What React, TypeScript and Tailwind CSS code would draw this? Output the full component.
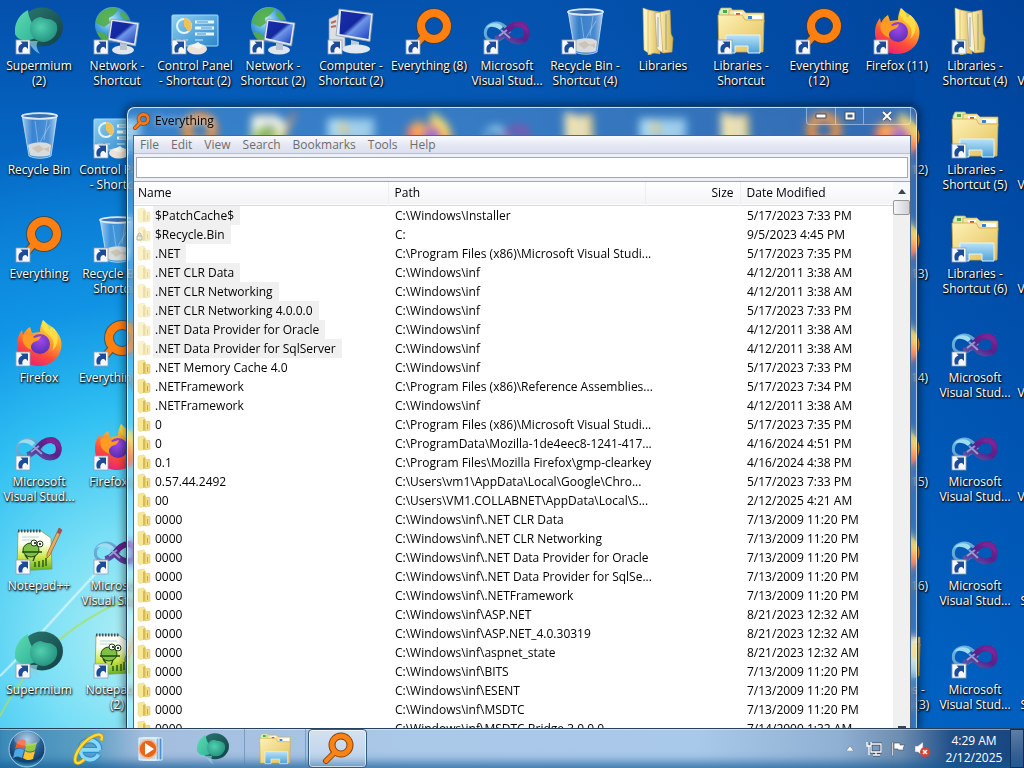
import React from "react";

type IconName = "supermium" | "network" | "control" | "computer" | "everything" | "vs" | "bin" | "library" | "folders" | "firefox" | "notepad";

interface DesktopItem {
  icon: IconName;
  label: string;
  plain?: boolean;
}

function Defs() {
  return (
    <svg width="0" height="0" className="absolute" aria-hidden="true">
      <defs>
        <linearGradient id="teal" x1="0" y1="0" x2="1" y2="1"><stop offset="0" stopColor="#5fdcb4" /><stop offset="1" stopColor="#2fb296" /></linearGradient>
        <radialGradient id="tealCore" cx=".4" cy=".4" r=".65"><stop offset="0" stopColor="#52cfae" /><stop offset="1" stopColor="#23927f" /></radialGradient>
        <linearGradient id="tealDark" x1="0" y1="0" x2="1" y2="1"><stop offset="0" stopColor="#2a7a70" /><stop offset="1" stopColor="#123f45" /></linearGradient>
        <radialGradient id="globe" cx=".4" cy=".35" r=".7"><stop offset="0" stopColor="#c4f1ff" /><stop offset=".5" stopColor="#4aa5e0" /><stop offset="1" stopColor="#1a5ca5" /></radialGradient>
        <linearGradient id="screen" x1="0" y1="0" x2="1" y2="1"><stop offset="0" stopColor="#1a2fa8" /><stop offset=".45" stopColor="#1327a0" /><stop offset=".55" stopColor="#6f97e8" /><stop offset="1" stopColor="#1b3cb8" /></linearGradient>
        <linearGradient id="panel" x1="0" y1="0" x2="1" y2="1"><stop offset="0" stopColor="#8fd0f0" /><stop offset="1" stopColor="#2b86cc" /></linearGradient>
        <linearGradient id="glass" x1="0" y1="0" x2="1" y2="0"><stop offset="0" stopColor="#c9e4fa" stopOpacity=".85" /><stop offset=".3" stopColor="#5d9bdc" stopOpacity=".6" /><stop offset=".75" stopColor="#79b0e4" stopOpacity=".6" /><stop offset="1" stopColor="#d5eafc" stopOpacity=".85" /></linearGradient>
        <linearGradient id="folder" x1="0" y1="0" x2="1" y2="1"><stop offset="0" stopColor="#fdf2b8" /><stop offset="1" stopColor="#e3bf55" /></linearGradient>
        <linearGradient id="folderSide" x1="0" y1="0" x2="1" y2="0"><stop offset="0" stopColor="#fbeeb0" /><stop offset="1" stopColor="#d9b650" /></linearGradient>
        <linearGradient id="blueStand" x1="0" y1="0" x2="0" y2="1"><stop offset="0" stopColor="#b9e3f6" /><stop offset="1" stopColor="#4da1d9" /></linearGradient>
        <linearGradient id="fire" x1=".8" y1="0" x2=".3" y2="1"><stop offset="0" stopColor="#fff04a" /><stop offset=".4" stopColor="#ffa02c" /><stop offset=".7" stopColor="#ff4b3a" /><stop offset="1" stopColor="#e5207a" /></linearGradient>
        <radialGradient id="fireCore" cx=".5" cy=".3" r=".7"><stop offset="0" stopColor="#a04ae8" /><stop offset="1" stopColor="#5b2fb5" /></radialGradient>
        <linearGradient id="vsPurple" x1="0" y1="1" x2="1" y2="0"><stop offset="0" stopColor="#5b62b4" /><stop offset=".5" stopColor="#5a2089" /><stop offset="1" stopColor="#74258f" /></linearGradient>
        <linearGradient id="vsBlue" x1="0" y1="0" x2="1" y2="1"><stop offset="0" stopColor="#67b9df" /><stop offset="1" stopColor="#6687c4" /></linearGradient>
        <linearGradient id="note" x1="0" y1="0" x2="0" y2="1"><stop offset=".3" stopColor="#fdfff4" /><stop offset=".65" stopColor="#cfe84a" /><stop offset="1" stopColor="#5fae22" /></linearGradient>
        <radialGradient id="orb" cx=".5" cy=".25" r=".8"><stop offset="0" stopColor="#9cc4e4" /><stop offset=".45" stopColor="#2a6398" /><stop offset=".75" stopColor="#123f6e" /><stop offset="1" stopColor="#3cc4ee" /></radialGradient>
      </defs>
    </svg>
  );
}

function Monitor() {
  return (
    <>
      <ellipse cx="30" cy="43" rx="11" ry="4.500" fill="#dfe6ee" />
      <path d="M27 34l7 2v7h-7z" fill="#b8c3d0" />
      <path d="M18 12l28 4-3.500 23L15 33z" fill="#e3eaf3" stroke="#8d9bb0" strokeWidth=".8" />
      <path d="M19.500 14l24.500 3.500-3 19-24-5.500z" fill="url(#screen)" />
    </>
  );
}

function Folders() {
  return (
    <>
      <path d="M2 5l2-4h10l2 3h10v6H2z" fill="#d9ecc0" stroke="#a3b778" strokeWidth=".7" />
      <path d="M12 3h14l3 3h18v9H12z" fill="#f6e5a0" stroke="#c9a645" strokeWidth=".7" />
      <path d="M17 5h8v3h-8zM31 8h14v4H31z" fill="#fff" />
      <rect x="6" y="3" width="4" height="3" fill="#4fa848" /><rect x="19" y="6" width="4" height="3" fill="#d8503c" /><rect x="31" y="9" width="4" height="3" fill="#3b82d0" />
      <path d="M1 8h24l3 5h19l-1 32H2z" fill="url(#folder)" stroke="#cfa743" strokeWidth=".8" />
      <path d="M9 28h34v18H31v-7H18v7H9z" fill="url(#blueStand)" stroke="#e0f4ff" strokeWidth="1" />
    </>
  );
}

function IconArt({ name }: { name: IconName }) {
  switch (name) {
    case "supermium":
      return (
        <>
          <ellipse cx="27" cy="20" rx="21" ry="19.500" fill="url(#tealDark)" />
          <path d="M13 3C3 8-1 18 0 27c3 7 12 8 20 4 3-2 2-5 0-9C17 15 13 10 13 3z" fill="url(#teal)" />
          <path d="M15 22c0-8 6-12 11-12 3 3 10 0 15 6 4 8-2 18-12 19-8 0-14-6-14-13z" fill="url(#tealCore)" />
          <path d="M13 34c3 6 7 11 12 13-4-6-4-10-2-13z" fill="#8fcfe0" opacity=".7" />
        </>
      );
    case "network":
      return (
        <>
          <circle cx="20" cy="18" r="18" fill="url(#globe)" />
          <path d="M8 5c7-5 14-5 18-3l-5 6-5 3 1 5-6 4-8-4c0-4 2-8 5-11zM4 25l8 1 4 6-4 3c-4-2-7-6-8-10zM28 4c4 2 7 5 9 9l-6-1-4-4z" fill="#51ad45" opacity=".9" />
          <Monitor />
        </>
      );
    case "computer":
      return (
        <>
          <path d="M2 12l10-5 6 3v30l-8 2-8-3z" fill="#dbe0e6" stroke="#8894a6" strokeWidth=".7" />
          <path d="M4 16l5-2M4 20l5-1" stroke="#b86a5c" strokeWidth="2" />
          <path d="M12 2l34 4.500-3 28-34-6z" fill="#e3eaf3" stroke="#8d9bb0" strokeWidth=".8" />
          <path d="M14 4l30 4-2.500 24-29-5z" fill="url(#screen)" />
          <path d="M24 33l8 2v5h-8z" fill="#c0cad6" />
          <ellipse cx="29" cy="42" rx="14" ry="4.500" fill="#e2e8ef" />
        </>
      );
    case "control":
      return (
        <>
          <rect x="1" y="8" width="46" height="31" rx="1" fill="url(#panel)" stroke="#a8dcf4" />
          <circle cx="13" cy="19" r="7" fill="none" stroke="#dff5ff" strokeWidth="2" />
          <path d="M13 19V11a8 8 0 0 1 5 14z" fill="#f0c15a" />
          <g stroke="#e6f8ff" strokeWidth="3"><path d="M24 15h19M24 21h19M24 27h19" /></g>
          <g stroke="#3b86b9" strokeWidth="1"><path d="M26 15h11M30 21h11M26 27h9" /></g>
          <path d="M5 33h5M12 33h5M24 33h8" stroke="#cceefa" />
          <ellipse cx="26" cy="42" rx="10" ry="5.500" fill="#e9e3da" /><path d="M20 39l7-4 5 4-4 3z" fill="#f7f4ee" />
        </>
      );
    case "everything":
      return (
        <>
          <path d="M19 29l-7 8" stroke="#4b3a2a" strokeWidth="8" strokeLinecap="round" opacity=".7" />
          <circle cx="29" cy="19" r="13" fill="none" stroke="#4b3a2a" strokeWidth="10" opacity=".7" />
          <path d="M19 29l-7 8" stroke="#ff8010" strokeWidth="6" strokeLinecap="round" />
          <circle cx="29" cy="19" r="13" fill="none" stroke="#ff8010" strokeWidth="8" />
        </>
      );
    case "vs":
      return (
        <>
          <path d="M25 23C20 16 14 15 9 17c-8 3-9 13-2 16 8 3 14-4 20-9" fill="none" stroke="url(#vsBlue)" strokeWidth="3" />
          <path d="M3 21c5-7 14-5 17-1l-3 3c-5-4-10-4-14-2z" fill="#9fdcf0" />
          <path d="M12 32c10-1 12-15 24-15 9 0 11 15 2 17-8 2-13-4-18-9" fill="none" stroke="url(#vsPurple)" strokeWidth="6" />
          <path d="M30 18c8-5 16 0 15 9-3-5-8-7-15-9z" fill="#7d2496" />
          <path d="M18 23l9 8M16 29l8-6" stroke="#9fb6dd" strokeWidth="2" opacity=".8" />
        </>
      );
    case "bin":
      return (
        <>
          <path d="M7 4h35l-6 41c-6 3-16 3-22 0z" fill="url(#glass)" stroke="#c7e0f4" strokeWidth=".8" />
          <path d="M13 34c6-3 17-4 23 0l-1 10c-5 2-15 2-20 0z" fill="#e9e4dc" opacity=".9" />
          <path d="M17 37l7-3 5 4-6 4zM28 38l6-2v5z" fill="#c8bfae" opacity=".8" />
          <path d="M20 10l3 22M32 9l-3 20M35 14l-10 17" stroke="#d5eaff" strokeWidth=".8" opacity=".5" />
          <ellipse cx="24.500" cy="5" rx="17.500" ry="2.800" fill="#376fb0" stroke="#dbe9f4" strokeWidth="1.800" />
        </>
      );
    case "library":
      return (
        <>
          <path d="M4 1l8 3v44l-7-5z" fill="#fff2bd" stroke="#d1b45c" strokeWidth=".6" />
          <path d="M9 3l12 2v42l-6-1-6 2z" fill="url(#folderSide)" stroke="#c5a346" strokeWidth=".6" />
          <path d="M16 6l8-1v41l-6-4z" fill="#f4efe2" stroke="#a89a73" strokeWidth=".6" />
          <path d="M21 5l10-2 1 24 2 4-1 14-9 1z" fill="url(#folderSide)" stroke="#c5a346" strokeWidth=".6" />
          <path d="M27 7v36M19 10v30" stroke="#6e8c8e" strokeWidth="1" opacity=".7" />
        </>
      );
    case "folders":
      return <Folders />;
    case "firefox":
      return (
        <>
          <path d="M28 1c4 3 5 6 6 10l3-3c7 6 11 13 9 22-2 10-11 17-22 17C11 47 2 38 2 26c0-7 2-11 5-15l1 5c2-4 4-6 7-8l2 6 8-1c0-4 1-8 3-12z" fill="url(#fire)" />
          <circle cx="25" cy="25" r="10" fill="url(#fireCore)" />
          <path d="M28 1c-3 8 2 12 7 16 5 5 4 11 2 15 6-5 7-13 4-20-3-5-10-7-13-11z" fill="#ffe34a" opacity=".8" />
          <path d="M8 16c5-3 9-1 11 3l7-2c-1 4-4 5-7 6-3 2-4 5-2 8-7-2-11-8-9-15z" fill="#ff9b24" />
        </>
      );
    case "notepad":
      return (
        <>
          <path d="M3 4h23l10 7 1 31-35 2z" fill="url(#note)" stroke="#7b9358" strokeWidth=".7" />
          <path d="M3 4h23" stroke="#41536c" strokeWidth="3" strokeDasharray="1.500 1.500" />
          <path d="M7 10h17M7 13h12" stroke="#b9d4ea" />
          <ellipse cx="16" cy="23" rx="8" ry="7" fill="#7dc043" stroke="#204415" />
          <circle cx="19" cy="16" r="3" fill="#fff" stroke="#204415" /><circle cx="25" cy="17" r="3" fill="#fff" stroke="#204415" />
          <circle cx="20" cy="16" r="1" fill="#000" /><circle cx="25" cy="17" r="1" fill="#000" />
          <path d="M7 25h20M10 28l3 4M20 29l-2 5M24 40v-6m4 6v-7m3 6v-8m-11 9v-5" stroke="#1e4a14" strokeWidth="1.300" fill="none" />
          <path d="M44 1l3 2-12 25-3 3v-4z" fill="#e9ae5b" stroke="#8c5b31" strokeWidth=".7" />
          <path d="M44 1l3 2-2 4-3-1z" fill="#a54b5e" />
        </>
      );
  }
}

function ShortcutMark() {
  return (
    <>
      <rect x="1" y="33" width="14" height="14" fill="#f5f9fd" stroke="#8aa0b8" strokeWidth=".8" />
      <path d="M4 45.500c-1.500-5 0-8 3.500-9l-2-2H13v7.500l-2-2c-3 0-4 2-3.500 5.500z" fill="#1c4b98" />
    </>
  );
}

function Glyph({ name, className, shortcut = false }: { name: IconName; className: string; shortcut?: boolean }) {
  return (
    <svg viewBox="0 0 48 48" className={className} fill="none" aria-hidden="true">
      <IconArt name={name} />
      {shortcut && <ShortcutMark />}
    </svg>
  );
}

const it = (icon: IconName, label: string, plain = false): DesktopItem => ({ icon, label, plain });
const vs = it("vs", "Microsoft\nVisual Stud...");

const columns: DesktopItem[][] = [
  [it("supermium", "Supermium\n(2)"), it("bin", "Recycle Bin", true), it("everything", "Everything"), it("firefox", "Firefox"), vs, it("notepad", "Notepad++"), it("supermium", "Supermium")],
  [it("network", "Network -\nShortcut"), it("control", "Control Panel\n- Shortcut"), it("bin", "Recycle Bin -\nShortcut"), it("everything", "Everything (2)"), it("firefox", "Firefox (2)"), vs, it("notepad", "Notepad++\n(2)")],
  [it("control", "Control Panel\n- Shortcut (2)"), it("everything", "")],
  [it("network", "Network -\nShortcut (2)"), it("notepad", "")],
  [it("computer", "Computer -\nShortcut (2)"), it("control", "")],
  [it("everything", "Everything (8)"), it("firefox", "")],
  [vs, it("vs", "")],
  [it("bin", "Recycle Bin -\nShortcut (4)"), it("library", "")],
  [it("library", "Libraries", true), it("control", "")],
  [it("folders", "Libraries -\nShortcut"), it("library", "")],
  [it("everything", "Everything\n(12)"), it("everything", "")],
  [it("firefox", "Firefox (11)"), it("firefox", "Firefox (12)"), it("firefox", "Firefox (13)"), it("firefox", "Firefox (14)"), it("firefox", "Firefox (15)"), it("firefox", "Firefox (16)"), it("folders", "Libraries -\nShortcut (3)")],
  [it("library", "Libraries -\nShortcut (4)"), it("folders", "Libraries -\nShortcut (5)"), it("folders", "Libraries -\nShortcut (6)"), vs, vs, vs, vs],
  [vs, vs, vs, vs, vs, it("folders", "Libraries -\nShortcut (7)"), it("folders", "Libraries -\nShortcut (8)")],
];

function Desktop() {
  return (
    <div className="flex h-full w-full overflow-hidden">
      {columns.map((column, c) => (
        <div key={c} className="flex w-[78px] shrink-0 flex-col">
          {column.map((item, r) => (
            <div key={r} className="flex h-[104px] shrink-0 flex-col items-center gap-[3px] pt-[7px]">
              <Glyph name={item.icon} className="size-12 shrink-0" shortcut={!item.plain} />
              <span className="text-center text-[12px] leading-[15px] whitespace-pre text-white [text-shadow:0_1px_2px_#000,1px_1px_2px_#000]">
                {item.label}
              </span>
            </div>
          ))}
        </div>
      ))}
    </div>
  );
}

const studio = "C:\\Program Files (x86)\\Microsoft Visual Studi...";
const inf = "C:\\Windows\\inf";
const setup = "7/13/2009 11:20 PM";
const files: [string, string, string][] = [
  ["$PatchCache$", "C:\\Windows\\Installer", "5/17/2023 7:33 PM"],
  ["$Recycle.Bin", "C:", "9/5/2023 4:45 PM"],
  [".NET", studio, "5/17/2023 7:35 PM"],
  [".NET CLR Data", inf, "4/12/2011 3:38 AM"],
  [".NET CLR Networking", inf, "4/12/2011 3:38 AM"],
  [".NET CLR Networking 4.0.0.0", inf, "5/17/2023 7:33 PM"],
  [".NET Data Provider for Oracle", inf, "4/12/2011 3:38 AM"],
  [".NET Data Provider for SqlServer", inf, "4/12/2011 3:38 AM"],
  [".NET Memory Cache 4.0", inf, "5/17/2023 7:33 PM"],
  [".NETFramework", "C:\\Program Files (x86)\\Reference Assemblies...", "5/17/2023 7:34 PM"],
  [".NETFramework", inf, "4/12/2011 3:38 AM"],
  ["0", studio, "5/17/2023 7:35 PM"],
  ["0", "C:\\ProgramData\\Mozilla-1de4eec8-1241-417...", "4/16/2024 4:51 PM"],
  ["0.1", "C:\\Program Files\\Mozilla Firefox\\gmp-clearkey", "4/16/2024 4:38 PM"],
  ["0.57.44.2492", "C:\\Users\\vm1\\AppData\\Local\\Google\\Chro...", "5/17/2023 7:33 PM"],
  ["00", "C:\\Users\\VM1.COLLABNET\\AppData\\Local\\S...", "2/12/2025 4:21 AM"],
  ["0000", "C:\\Windows\\inf\\.NET CLR Data", setup],
  ["0000", "C:\\Windows\\inf\\.NET CLR Networking", setup],
  ["0000", "C:\\Windows\\inf\\.NET Data Provider for Oracle", setup],
  ["0000", "C:\\Windows\\inf\\.NET Data Provider for SqlSe...", setup],
  ["0000", "C:\\Windows\\inf\\.NETFramework", setup],
  ["0000", "C:\\Windows\\inf\\ASP.NET", "8/21/2023 12:32 AM"],
  ["0000", "C:\\Windows\\inf\\ASP.NET_4.0.30319", "8/21/2023 12:32 AM"],
  ["0000", "C:\\Windows\\inf\\aspnet_state", "8/21/2023 12:32 AM"],
  ["0000", "C:\\Windows\\inf\\BITS", setup],
  ["0000", "C:\\Windows\\inf\\ESENT", setup],
  ["0000", "C:\\Windows\\inf\\MSDTC", setup],
  ["0000", "C:\\Windows\\inf\\MSDTC Bridge 3.0.0.0", "7/14/2009 1:32 AM"],
];

function RowIcon({ faded, locked }: { faded: boolean; locked: boolean }) {
  return (
    <svg viewBox="0 0 16 16" className={faded ? "size-4 shrink-0 opacity-50" : "size-4 shrink-0"} aria-hidden="true">
      <path d="M2 2l6-1 1 2v11l-5 1.500L2 14z" fill="#f6e893" stroke="#e2cf7c" strokeWidth=".5" />
      <path d="M7 4l2.500-1v11L7 15z" fill="#d9bd4e" />
      <path d="M9 6l4-1 1 1v8l-5 1z" fill="#efdc84" stroke="#d3b95c" strokeWidth=".5" />
      <path d="M11.500 8v5" stroke="#c9a945" />
      {locked && <path d="M2 10V8q2-2 3 0v2M1 10h5v4H1z" fill="#dcdcb8" stroke="#6d6a4c" />}
    </svg>
  );
}

function FileTable() {
  return (
    <div className="min-w-0 flex-1">
      <table className="w-full table-fixed border-collapse text-left text-[12px]">
        <colgroup>
          <col className="w-[254px]" />
          <col className="w-[257px]" />
          <col className="w-[95px]" />
          <col />
        </colgroup>
        <thead>
          <tr className="h-[23px] border-b border-[#d9dbde] bg-linear-to-b from-white to-[#f3f4f5]">
            <th className="border-r border-[#eceef0] px-1 py-0 leading-[20px] font-normal">Name</th>
            <th className="border-r border-[#eceef0] px-1.5 py-0 leading-[20px] font-normal">Path</th>
            <th className="border-r border-[#eceef0] px-1.5 py-0 text-right leading-[20px] font-normal">Size</th>
            <th className="px-1.5 py-0 leading-[20px] font-normal">Date Modified</th>
          </tr>
        </thead>
        <tbody>
          {files.map(([name, path, date], i) => (
            <tr key={i} className="h-[19px]">
              <td className="p-0 pl-0.5">
                <div className="flex h-[19px] items-center gap-px whitespace-nowrap">
                  <RowIcon faded={i < 8} locked={i === 1} />
                  <span className={i < 8 ? "bg-[#f0f0f0] pr-1.5 pl-0.5 leading-[19px]" : "pl-0.5 leading-[19px]"}>{name}</span>
                </div>
              </td>
              <td className="py-0 pr-0 pl-[7px] leading-[19px] whitespace-nowrap">{path}</td>
              <td className="p-0" />
              <td className="py-0 pr-0 pl-[7px] leading-[19px] whitespace-nowrap">{date}</td>
            </tr>
          ))}
        </tbody>
      </table>
    </div>
  );
}

function Scrollbar() {
  return (
    <div className="flex w-[17px] shrink-0 flex-col justify-between bg-[#f0f0f1]">
      <div className="flex flex-col">
        <button aria-label="Scroll up" className="flex h-[18px] items-center justify-center bg-[#f7f8f9]">
          <svg viewBox="0 0 8 5" className="h-[5px] w-2"><path d="M0 5l4-5 4 5z" fill="#3d4754" /></svg>
        </button>
        <div className="h-[15px] rounded-xs border border-[#979797] bg-linear-to-r from-[#f6f6f7] to-[#cfd1d6]" />
      </div>
      <div className="flex h-0.5 justify-center overflow-hidden">
        <div className="h-1 w-2 bg-[#3d4754]" />
      </div>
    </div>
  );
}

function AppWindow() {
  const caption = "flex items-center justify-center border-r border-white/40";
  return (
    <section className="absolute top-[106px] right-[106px] bottom-0 left-[126px] flex flex-col overflow-hidden rounded-t-lg border border-b-0 border-[#173f66] bg-white/20 px-1.5 shadow-[0_0_8px_2px_rgba(0,0,0,0.45),inset_1px_1px_0_rgba(255,255,255,0.75),inset_-1px_0_0_rgba(255,255,255,0.6)] backdrop-blur-[4px]">
      <header className="flex h-7 shrink-0 items-start justify-between">
        <div className="flex h-[27px] items-center gap-1">
          <svg viewBox="0 0 18 18" className="size-[18px]" fill="none" aria-hidden="true">
            <path d="M7 11l-5 5" stroke="#944012" strokeWidth="4" strokeLinecap="round" />
            <circle cx="10.500" cy="7" r="4.700" stroke="#944012" strokeWidth="4.200" />
            <path d="M7 11l-5 5" stroke="#f47c1c" strokeWidth="2.600" strokeLinecap="round" />
            <circle cx="10.500" cy="7" r="4.700" stroke="#f47c1c" strokeWidth="2.800" />
          </svg>
          <h1 className="text-[12px] text-black [text-shadow:0_0_6px_#fff]">Everything</h1>
        </div>
        <div className="flex h-[18px] rounded-b border border-t-0 border-white/40 bg-white/5">
          <button aria-label="Minimize" className={`${caption} w-[29px]`}>
            <svg viewBox="0 0 12 6" className="h-1.5 w-3"><path d="M1 1h10v4H1z" fill="#fff" stroke="#444f60" /></svg>
          </button>
          <button aria-label="Maximize" className={`${caption} w-7`}>
            <svg viewBox="0 0 12 10" className="h-2.5 w-3"><path d="M2.500 2.500h7v5h-7z" fill="none" stroke="#444f60" strokeWidth="4" /><path d="M2.500 2.500h7v5h-7z" fill="none" stroke="#fff" strokeWidth="2" /></svg>
          </button>
          <button aria-label="Close" className="flex w-[46px] items-center justify-center">
            <svg viewBox="0 0 12 10" className="h-2.5 w-3"><path d="M2 1l8 8M10 1L2 9" stroke="#444f60" strokeWidth="3.500" /><path d="M2 1l8 8M10 1L2 9" stroke="#fff" strokeWidth="2" /></svg>
          </button>
        </div>
      </header>
      <div className="flex min-h-0 flex-1 flex-col overflow-hidden border border-b-0 border-[#4a6a8c] bg-white">
        <nav className="flex h-[18px] shrink-0 items-center gap-3 border-b border-[#b9bfcc] bg-linear-to-b from-[#fafbfe] via-[#e6e9f4] to-[#dbe0ee] px-1.5 text-[12px] text-[#6d6d6d]">
          {["File", "Edit", "View", "Search", "Bookmarks", "Tools", "Help"].map((m) => (
            <button key={m} className="leading-[18px]">{m}</button>
          ))}
        </nav>
        <div className="flex shrink-0 border-b border-[#a2a7b4] bg-[#eff0f5] px-0.5 py-[3px]">
          <input aria-label="Search" className="h-[21px] w-full min-w-0 border border-[#a3a7b2] bg-white px-1 text-[12px] outline-none" />
        </div>
        <div className="flex min-h-0 flex-1 overflow-hidden">
          <FileTable />
          <Scrollbar />
        </div>
      </div>
    </section>
  );
}

function Wallpaper() {
  return (
    <div className="absolute inset-0 bg-linear-to-b from-[#0450ac] via-[#0a80dc] via-45% to-[#12a0ec]">
      <div className="absolute inset-0 bg-linear-to-r from-transparent from-15% via-[#0455b0]/70 via-50% to-[#00429a] to-100%" />
      <div className="absolute inset-0 bg-[radial-gradient(ellipse_420px_440px_at_140px_640px,#b4eff3_0%,#7be0f6_24%,#30c0f2_52%,rgba(20,160,234,0.65)_76%,transparent_115%)]" />
      <div className="absolute inset-y-0 right-0 w-[110px] bg-linear-to-b from-transparent to-[#0072d8]/60" />
      <svg viewBox="0 0 130 190" className="absolute bottom-0 left-0 h-[190px] w-[130px]" fill="none" aria-hidden="true">
        <path d="M0 138C35 104 80 50 130 0" stroke="#fff" strokeWidth="3" opacity=".35" />
        <path d="M0 138C35 104 80 50 130 0" stroke="#fff" opacity=".5" />
        <path d="M0 178C28 125 66 86 130 60" stroke="#a8e05a" strokeWidth="2" opacity=".75" />
      </svg>
    </div>
  );
}

function Orb() {
  return (
    <svg viewBox="0 0 40 40" className="size-10" aria-hidden="true">
      <circle cx="20" cy="20" r="18" fill="url(#orb)" stroke="#a9cce4" strokeWidth="1" />
      <path d="M10 13c3-3 6-3 9-1l-2 8c-3-2-6-2-9 0z" fill="#f0592a" />
      <path d="M20 13c3 2 6 2 10 0l-2 8c-4 2-7 2-10 0z" fill="#9ac93c" />
      <path d="M8 21c3-2 6-2 9 0l-2 8c-3-2-6-2-9 0z" fill="#4fa8e6" />
      <path d="M18 22c3 2 6 2 10 0l-2 8c-4 2-7 1-10-1z" fill="#fcc530" />
      <ellipse cx="20" cy="10" rx="13" ry="7" fill="#fff" opacity=".22" />
    </svg>
  );
}

function Ie() {
  return (
    <svg viewBox="0 0 36 36" className="size-[34px]" fill="none" aria-hidden="true">
      <path d="M29 19H11M29 19c0-13-20-14-20 0 0 12 15 13 19 5" stroke="#2b8ed0" strokeWidth="6.500" />
      <path d="M29 19H11M29 19c0-13-20-14-20 0 0 12 15 13 19 5" stroke="#8ad8f8" strokeWidth="4" />
      <path d="M31 9c3-8-4-8-13-2C8 14 1 27 4 32c2 2 6 0 9-3" stroke="#c89a18" strokeWidth="4" />
      <path d="M31 9c3-8-4-8-13-2C8 14 1 27 4 32c2 2 6 0 9-3" stroke="#ffdb38" strokeWidth="2.500" />
    </svg>
  );
}

function MediaPlayer() {
  return (
    <svg viewBox="0 0 28 28" className="size-7" aria-hidden="true">
      <path d="M8 3h17v22H8z" fill="#4b8fd0" stroke="#d8ecfa" /><path d="M5 3h17v22H5z" fill="#7db8e6" stroke="#e8f5ff" /><path d="M2 3h17v22H2z" fill="#c5dff2" stroke="#edf7ff" />
      <circle cx="11" cy="14" r="9" fill="#e8651c" stroke="#f7b58c" strokeWidth="1.500" />
      <path d="M8 8l9 6-9 6z" fill="#fff" />
    </svg>
  );
}

function Magnifier() {
  return (
    <svg viewBox="0 0 34 34" className="size-[34px]" fill="none" aria-hidden="true">
      <path d="M14 20L5 29" stroke="#8b3d08" strokeWidth="6" strokeLinecap="round" />
      <circle cx="20" cy="13" r="9" stroke="#8b3d08" strokeWidth="7" />
      <path d="M14 20L5 29" stroke="#f88416" strokeWidth="4" strokeLinecap="round" />
      <circle cx="20" cy="13" r="9" stroke="#f88416" strokeWidth="5" />
    </svg>
  );
}

function Taskbar() {
  const slot = "flex h-full w-[62px] shrink-0 items-center justify-center";
  return (
    <footer className="relative flex h-10 shrink-0 items-stretch border-t border-[#23415f] bg-[linear-gradient(to_right,#3c8bb8_0%,#5d9fc4_9%,#a3bddd_14%,#aac8e8_40%,#a9c9ea_68%,#8fb0d2_82%,#6d8db0_88%,#1f4f88_93%,#174580_100%)] shadow-[inset_0_1px_0_rgba(255,255,255,0.45),inset_0_-10px_10px_-4px_rgba(20,90,150,0.7)]">
      <button aria-label="Start" className="flex w-[54px] shrink-0 items-center justify-center"><Orb /></button>
      <div className="ml-1 flex">
        <button aria-label="Internet Explorer" className={slot}><Ie /></button>
        <button aria-label="Media Player" className={slot}><MediaPlayer /></button>
        <button aria-label="Supermium" className={slot}><Glyph name="supermium" className="size-8" /></button>
        <button aria-label="Explorer" className={`${slot} border-x border-[#5f83ab]/60`}><Glyph name="folders" className="size-8" /></button>
        <button aria-label="Everything" className="mx-0.5 flex w-[59px] items-center justify-center rounded-sm border border-[#35597f] bg-linear-to-b from-white/50 to-white/20 shadow-[inset_0_0_0_1px_rgba(255,255,255,0.6)]"><Magnifier /></button>
      </div>
      <div className="ml-auto flex items-center">
        <button aria-label="Show hidden icons" className="mr-3 flex h-4 items-center">
          <svg viewBox="0 0 8 5" className="h-[5px] w-2"><path d="M0 5l4-5 4 5z" fill="#fff" stroke="#50657e" strokeWidth=".5" /></svg>
        </button>
        <svg viewBox="0 0 16 16" className="mr-2 size-4" fill="none" aria-label="Network">
          <path d="M5 3h10v8H5zM7 14h7M10 11v3" stroke="#3a4a5d" strokeWidth="3" /><path d="M5 3h10v8H5zM7 14h7M10 11v3M1 1v4h4V1M3 5v9" stroke="#fff" strokeWidth="1.300" />
        </svg>
        <svg viewBox="0 0 16 16" className="mr-2 size-4" aria-label="Action Center">
          <path d="M2 1h1.500v14H2z" fill="#fff" stroke="#3a4a5d" strokeWidth=".5" /><path d="M4 2h6v2h5l-2 3 1 2H8V8H4z" fill="#fff" stroke="#3a4a5d" strokeWidth=".6" />
        </svg>
        <svg viewBox="0 0 16 16" className="mr-2 size-4" aria-label="Volume muted">
          <path d="M1 5h3l5-4v14l-5-4H1z" fill="#fff" stroke="#6c7f96" strokeWidth=".5" /><circle cx="11" cy="11" r="5" fill="#d8402f" /><path d="M9 9l4 4M13 9l-4 4" stroke="#fff" strokeWidth="1.500" />
        </svg>
        <time className="flex w-[72px] flex-col items-center text-[12px] leading-[17px] text-white">
          <span>4:29 AM</span>
          <span>2/12/2025</span>
        </time>
        <button aria-label="Show desktop" className="h-[39px] w-3.5 border border-[#0e2f5a] bg-linear-to-b from-white/30 to-white/5" />
      </div>
    </footer>
  );
}

export default function App() {
  return (
    <div className="relative flex h-screen flex-col overflow-hidden font-['Open_Sans','Noto_Sans',sans-serif] text-black">
      <Defs />
      <main className="relative min-h-0 flex-1 overflow-hidden">
        <Wallpaper />
        <div className="absolute inset-0"><Desktop /></div>
        <AppWindow />
      </main>
      <Taskbar />
    </div>
  );
}
